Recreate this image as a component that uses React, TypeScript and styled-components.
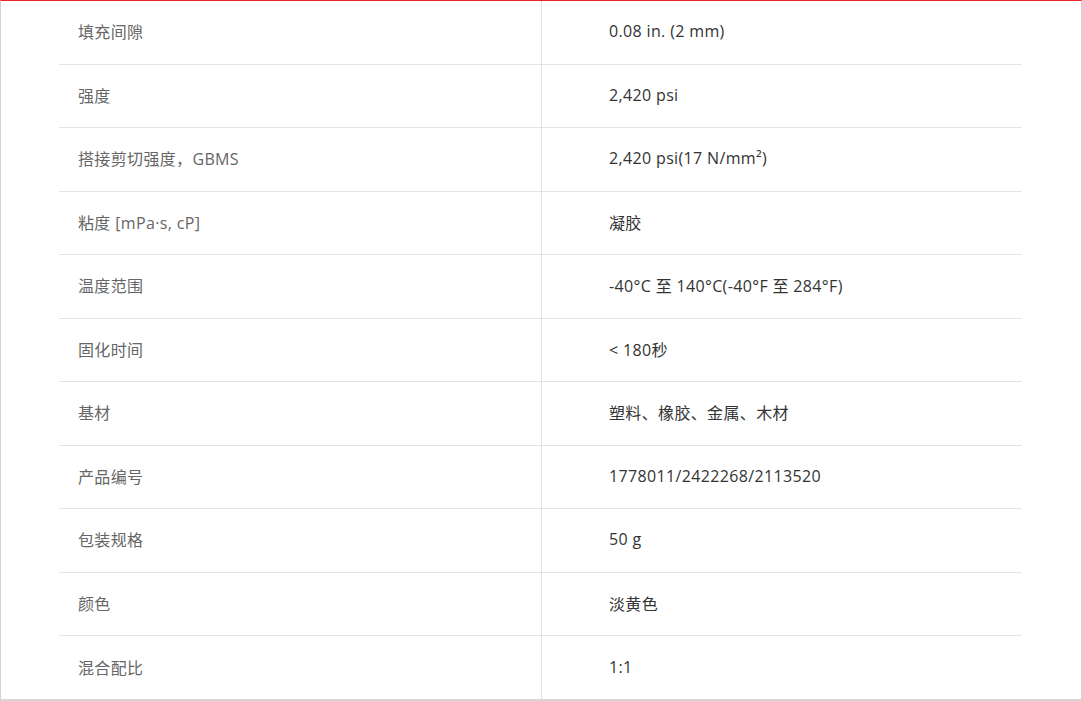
import React from "react";
import styled, { createGlobalStyle } from "styled-components";

const GlobalStyle = createGlobalStyle`
  html, body {
    margin: 0;
    padding: 0;
    background: #ffffff;
  }
  body {
    font-family: "Open Sans", "Noto Sans CJK SC", sans-serif;
  }
`;

const specs: [string, string][] = [
  ["填充间隙", "0.08 in. (2 mm)"],
  ["强度", "2,420 psi"],
  ["搭接剪切强度，GBMS", "2,420 psi(17 N/mm²)"],
  ["粘度 [mPa·s, cP]", "凝胶"],
  ["温度范围", "-40°C 至 140°C(-40°F 至 284°F)"],
  ["固化时间", "< 180秒"],
  ["基材", "塑料、橡胶、金属、木材"],
  ["产品编号", "1778011/2422268/2113520"],
  ["包装规格", "50 g"],
  ["颜色", "淡黄色"],
  ["混合配比", "1:1"],
];

const Frame = styled.div`
  box-sizing: border-box;
  width: 1082px;
  height: 701px;
  border-top: 1px solid #e8232b;
  border-left: 1px solid #d2d2d2;
  border-right: 1px solid #d2d2d2;
  border-bottom: 2px solid #d6d6d6;
  padding: 0 59px 0 58px;
  overflow: hidden;
`;

const Table = styled.div`
  display: grid;
  grid-template-columns: 482px 1fr;
`;

const Cell = styled.div<{ $value?: boolean }>`
  box-sizing: border-box;
  height: 63.5px;
  display: flex;
  align-items: center;
  padding-left: ${({ $value }) => ($value ? "67px" : "19px")};
  padding-bottom: 2px;
  border-bottom: 1px solid #e3e3e3;
  border-left: ${({ $value }) => ($value ? "1px solid #e3e3e3" : "none")};
  font-size: 16px;
  letter-spacing: 0.35px;
  color: ${({ $value }) => ($value ? "#333333" : "#666666")};
  white-space: nowrap;

  &:nth-last-child(-n + 2) {
    border-bottom: none;
  }
`;

export default function App() {
  return (
    <>
      <GlobalStyle />
      <Frame>
        <Table>
          {specs.map(([label, value]) => (
            <React.Fragment key={label}>
              <Cell>{label}</Cell>
              <Cell $value>{value}</Cell>
            </React.Fragment>
          ))}
        </Table>
      </Frame>
    </>
  );
}
